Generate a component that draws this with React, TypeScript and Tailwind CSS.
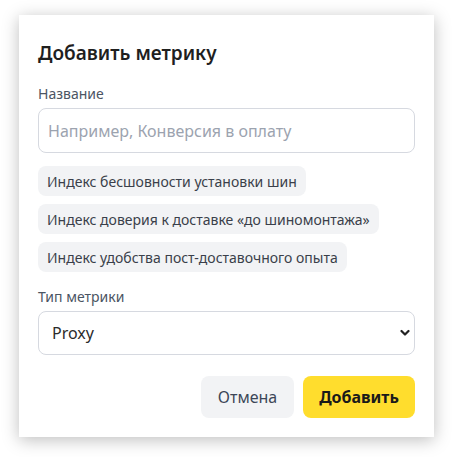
import { useState } from "react";

const suggestions = [
  "Индекс бесшовности установки шин",
  "Индекс доверия к доставке «до шиномонтажа»",
  "Индекс удобства пост-доставочного опыта",
];

export default function App() {
  const [name, setName] = useState("");
  const [type, setType] = useState("proxy");

  return (
    <div
      className="min-h-screen w-full bg-white pl-[19px] pt-[15px]"
      style={{ fontFamily: '"Noto Sans", "Open Sans", sans-serif' }}
    >
      <div className="w-[415px] bg-white px-[19px] pb-[19px] pt-[24px] shadow-[0_3px_16px_rgba(0,0,0,0.26)]">
        {/* Header */}
        <h2 className="text-[19px] font-semibold leading-[28px] text-[#1f1f1f]">Добавить метрику</h2>

        {/* Name */}
        <label className="mt-[17px] block text-[14px] leading-[20px] text-[#4b5563]">Название</label>
        <input
          value={name}
          onChange={(e) => setName(e.target.value)}
          placeholder="Например, Конверсия в оплату"
          className="mt-1 h-[45px] w-full rounded-lg border border-[#d6d9e0] px-[9px] text-[16px] text-[#1f2937] outline-none placeholder:text-[#9ca3af]"
        />

        {/* Suggestions */}
        <div className="mt-[13px] flex flex-col items-start gap-[8px]">
          {suggestions.map((s) => (
            <button
              key={s}
              onClick={() => setName(s)}
              className="h-[30px] rounded-lg bg-[#f2f3f5] px-[9px] text-[14px] text-[#3a3f4a]"
            >
              {s}
            </button>
          ))}
        </div>

        {/* Type */}
        <label className="mt-[15px] block text-[14px] leading-[20px] text-[#4b5563]">Тип метрики</label>
        <div className="relative mt-1">
          <select
            value={type}
            onChange={(e) => setType(e.target.value)}
            className="h-[44px] w-full appearance-none rounded-lg border border-[#d6d9e0] bg-white px-[13px] text-[16px] text-[#2b2b2b] outline-none"
          >
            <option value="proxy">Proxy</option>
            <option value="target">Target</option>
          </select>
          <svg
            className="pointer-events-none absolute right-[5px] top-1/2 -translate-y-1/2"
            width="10"
            height="7"
            viewBox="0 0 10 7"
            fill="none"
          >
            <path d="M1.5 1.5L5 5L8.5 1.5" stroke="#222" strokeWidth="2.2" strokeLinecap="round" strokeLinejoin="round" />
          </svg>
        </div>

        {/* Actions */}
        <div className="mt-[21px] flex justify-end gap-[9px]">
          <button className="h-[42px] w-[93px] rounded-lg bg-[#f2f3f5] text-[16px] text-[#3c4657]">Отмена</button>
          <button className="h-[42px] w-[112px] rounded-lg bg-[#ffdd2d] text-[16px] font-bold text-[#1a1a1a]">
            Добавить
          </button>
        </div>
      </div>
    </div>
  );
}
